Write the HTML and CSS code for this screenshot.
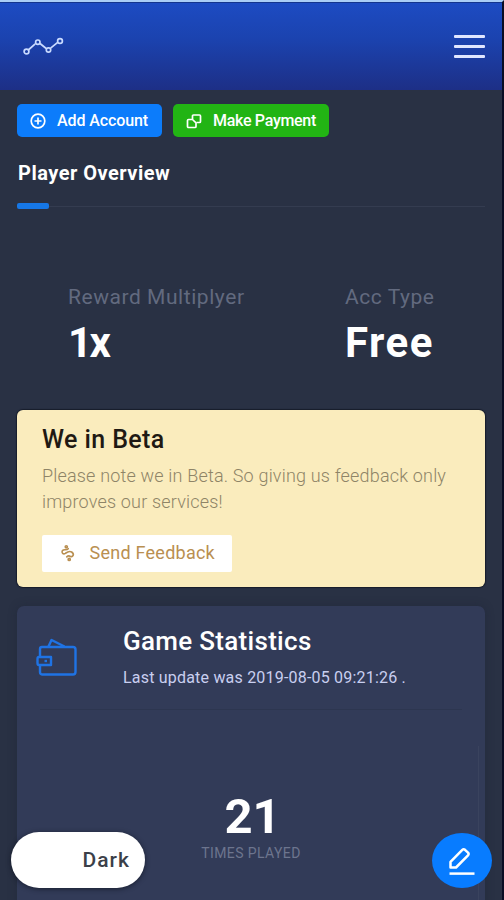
FILE: index.html
```
<!DOCTYPE html>
<html lang="en">
<head>
    <meta charset="UTF-8">
    <meta name="viewport" content="width=device-width, initial-scale=1">
    <title>Player Overview</title>
    <link rel="stylesheet" href="styles.css">
</head>
<body>
    <div class="page">
        <!-- Header -->
        <header class="header">
            <a href="#" class="logo">
                <svg width="44" height="20" viewBox="0 0 44 20" fill="none" stroke="currentColor" stroke-width="1.7">
                    <path d="M6.3 13 L13.2 6.8 M18 6.5 L24.2 11.5 M28.6 11.2 L36 5.2"/>
                    <circle cx="4.5" cy="14.5" r="2.4"/>
                    <circle cx="15.8" cy="5.2" r="2.2"/>
                    <circle cx="26.5" cy="13" r="2.2"/>
                    <circle cx="38" cy="4" r="2.4"/>
                </svg>
            </a>
            <button class="menu" type="button" aria-label="Menu">
                <span></span>
                <span></span>
                <span></span>
            </button>
        </header>

        <main class="content">
            <!-- Buttons -->
            <div class="actions">
                <button type="button" class="btn btn-primary">
                    <svg width="16" height="16" viewBox="0 0 16 16" fill="none" stroke="currentColor" stroke-width="1.7">
                        <circle cx="8" cy="8" r="6.8"/>
                        <path d="M8 4.5 V11.5 M4.5 8 H11.5"/>
                    </svg>
                    <span>Add Account</span>
                </button>
                <button type="button" class="btn btn-success">
                    <svg width="16" height="16" viewBox="0 0 16 16" fill="none" stroke="currentColor" stroke-width="1.7" stroke-linejoin="round">
                        <path d="M6.500 6 V3 Q6.500 2 7.500 2 H13.500 Q14.500 2 14.500 3 V8.500 Q14.500 9.500 13.500 9.500 H10.500"/>
                        <path d="M2.500 6.500 H6.500 L10 9.800 V13.500 Q10 14.500 9 14.500 H2.500 Q1.500 14.500 1.500 13.500 V7.500 Q1.500 6.500 2.500 6.500 Z"/>
                    </svg>
                    <span>Make Payment</span>
                </button>
            </div>

            <h2 class="title">Player Overview</h2>
            <div class="title-line"></div>

            <!-- Overview values -->
            <div class="overview">
                <div class="overview-item">
                    <div class="overview-label">Reward Multiplyer</div>
                    <div class="overview-value value-short">1x</div>
                </div>
                <div class="overview-item">
                    <div class="overview-label">Acc Type</div>
                    <div class="overview-value">Free</div>
                </div>
            </div>

            <!-- Beta notice -->
            <section class="notice">
                <h3>We in Beta</h3>
                <p>Please note we in Beta. So giving us feedback only<br>improves our services!</p>
                <button type="button" class="feedback">
                    <svg width="16" height="18" viewBox="0 0 16 18" fill="none" stroke="currentColor" stroke-width="1.7" stroke-linecap="round">
                        <circle cx="6.5" cy="2.6" r="1.1"/>
                        <path d="M8.500 4.500 C6.500 7 4.500 4.500 2.500 6.500 C1 8.800 3.500 10.600 5.500 9.400 C7.500 8 9.500 6.500 12 8 C15.500 10.500 13 13.500 10.800 12.500 C9 11.600 8 12 7 13"/>
                        <circle cx="9.500" cy="15.6" r="1.1"/>
                    </svg>
                    <span>Send Feedback</span>
                </button>
            </section>

            <!-- Game statistics -->
            <section class="stats">
                <div class="stats-head">
                    <svg class="wallet" width="42" height="40" viewBox="0 0 42 40" fill="none" stroke="currentColor" stroke-width="2.4" stroke-linejoin="round">
                        <path d="M4 19 V11 Q4 9 6 9 H37 Q39.5 9 39.5 11.5 V34 Q39.5 36.500 37 36.500 H6 Q4 36.500 4 34 V27"/>
                        <path d="M12.500 8.500 L15.500 2 L28.500 8.500"/>
                        <path d="M3 19 H15 V27 H3 Q1.500 27 1.500 25 V21 Q1.500 19 3 19 Z"/>
                        <path d="M8.500 23 H11"/>
                    </svg>
                    <div class="stats-title">
                        <h3>Game Statistics</h3>
                        <p>Last update was 2019-08-05 09:21:26 .</p>
                    </div>
                </div>
                <div class="stats-body">
                    <div class="played">21</div>
                    <div class="played-label">TIMES PLAYED</div>
                </div>
            </section>
        </main>
    </div>

    <!-- Floating buttons -->
    <button type="button" class="theme">Dark</button>
    <button type="button" class="edit" aria-label="Edit">
        <svg width="30" height="32" viewBox="0 0 30 32" fill="none" stroke="currentColor" stroke-width="2.500" stroke-linejoin="round">
            <path d="M3.500 22.500 V16.800 L15.300 4.800 Q16.600 3.600 18 4.800 L21 7.600 Q22.200 9 21 10.300 L9 22.500 Z"/>
            <path d="M2.500 28.600 H27.500"/>
        </svg>
    </button>
</body>
</html>
```
FILE: styles.css
```
* {
    box-sizing: border-box;
}
body {
    margin: 0;
    height: 900px;
    overflow: hidden;
    background-color: #293144;
    color: #fff;
    font-family: Roboto, "Liberation Sans", sans-serif;
}
h2, h3, p {
    margin: 0;
}
button {
    border: none;
    font-family: inherit;
    cursor: pointer;
}
.page {
    height: 900px;
    overflow: hidden;
    border-top: 2px solid #a9cdf6;
    border-right: 2px solid #090d24;
}

/* Header */
.header {
    display: flex;
    justify-content: space-between;
    align-items: center;
    height: 88px;
    padding: 0 17px 0 22px;
    border-top: 1px solid #14358e;
    background: linear-gradient(#1d4bc2, #1b43b0 40%, #1d2f86);
}
.logo {
    display: flex;
    color: #c9daff;
}
.menu {
    display: flex;
    flex-direction: column;
    gap: 7px;
    padding: 0;
    background: none;
}
.menu span {
    width: 31px;
    height: 3px;
    border-radius: 1px;
    background-color: #e0e6ff;
}

.content {
    padding: 14px 17px 0;
}

/* Buttons */
.actions {
    display: flex;
    gap: 11px;
}
.btn {
    display: flex;
    align-items: center;
    gap: 11px;
    height: 33px;
    padding: 0 13px;
    border-radius: 5px;
    color: #fff;
    font-size: 16px;
    font-weight: 500;
    letter-spacing: -0.1px;
    white-space: nowrap;
}
.btn-primary {
    width: 145px;
    background-color: #0c7cfb;
}
.btn-success {
    width: 156px;
    background-color: #22b414;
    letter-spacing: -0.3px;
}

.title {
    margin-top: 24px;
    padding-left: 1px;
    font-size: 20px;
    font-weight: 700;
    letter-spacing: 0.5px;
    line-height: 24px;
}
.title-line {
    height: 6px;
    margin-top: 18px;
    background: linear-gradient(#343c50, #343c50) 0 3px / 100% 1px no-repeat;
}
.title-line::before {
    content: "";
    display: block;
    width: 32px;
    height: 6px;
    border-radius: 2px;
    background-color: #1677e6;
}

/* Overview */
.overview {
    display: grid;
    grid-template-columns: 277px auto;
    margin-top: 75px;
    padding-left: 51px;
}
.overview-label {
    color: #626a7f;
    font-size: 21px;
    letter-spacing: 0.55px;
    line-height: 26px;
}
.overview-value {
    margin-top: 8px;
    font-size: 42px;
    font-weight: 700;
    letter-spacing: 1.5px;
    line-height: 50px;
}
.value-short {
    letter-spacing: -2.5px;
}

/* Beta notice */
.notice {
    height: 177px;
    margin-top: 42px;
    padding: 14px 25px;
    border-radius: 6px;
    background-color: #faecbd;
    box-shadow: 0 0 1px 1px #171d2b;
}
.notice h3 {
    color: #1f1913;
    font-size: 25px;
    font-weight: 500;
    letter-spacing: 0.4px;
    line-height: 32px;
}
.notice p {
    margin-top: 7px;
    color: #8e8467;
    font-size: 18px;
    font-weight: 300;
    letter-spacing: 0.18px;
    line-height: 26px;
    white-space: nowrap;
}
.feedback {
    display: flex;
    align-items: center;
    gap: 14px;
    width: 190px;
    height: 37px;
    margin-top: 20px;
    padding: 0 17px 2px 18px;
    border-radius: 2px;
    background-color: #fff;
    color: #b98f51;
    font-size: 18px;
    letter-spacing: 0.25px;
    white-space: nowrap;
}

/* Game statistics */
.stats {
    height: 320px;
    margin-top: 19px;
    border-radius: 7px;
    background-color: #323b58;
    box-shadow: 0 0 10px rgba(24, 30, 45, 0.3);
}
.stats-head {
    display: flex;
    height: 104px;
    margin: 0 23px;
    border-bottom: 1px solid #2d3650;
}
.wallet {
    margin: 32px 0 0 -4px;
    color: #1f73e4;
}
.stats-title {
    margin: 19px 0 0 45px;
}
.stats-title h3 {
    font-size: 26px;
    font-weight: 500;
    letter-spacing: 0.3px;
    line-height: 32px;
}
.stats-title p {
    margin-top: 10px;
    color: #c9cff0;
    font-size: 16px;
    letter-spacing: 0.2px;
    line-height: 22px;
    white-space: nowrap;
}
.stats-body {
    height: 190px;
    margin: 36px 6px 0 0;
    padding-top: 43px;
    padding-left: 7px;
    border-right: 1px solid #3a435e;
    text-align: center;
}
.played {
    padding-left: 3px;
    font-size: 49px;
    font-weight: 700;
    line-height: 56px;
}
.played-label {
    margin-top: -2px;
    color: #6d758e;
    font-size: 14px;
    letter-spacing: 0.4px;
    line-height: 20px;
}

/* Floating buttons */
.theme {
    position: absolute;
    left: 11px;
    top: 832px;
    width: 134px;
    height: 56px;
    padding: 0 15px 0 0;
    border-radius: 28px;
    background-color: #fff;
    box-shadow: 0 1px 5px rgba(14, 18, 32, 0.7);
    color: #3b3f49;
    font-size: 21px;
    font-weight: 500;
    letter-spacing: 1px;
    text-align: right;
}
.edit {
    position: absolute;
    left: 432px;
    top: 833px;
    display: flex;
    align-items: center;
    justify-content: center;
    width: 60px;
    height: 55px;
    padding: 0;
    border-radius: 50%;
    background-color: #087cff;
    color: #fff;
}
```
